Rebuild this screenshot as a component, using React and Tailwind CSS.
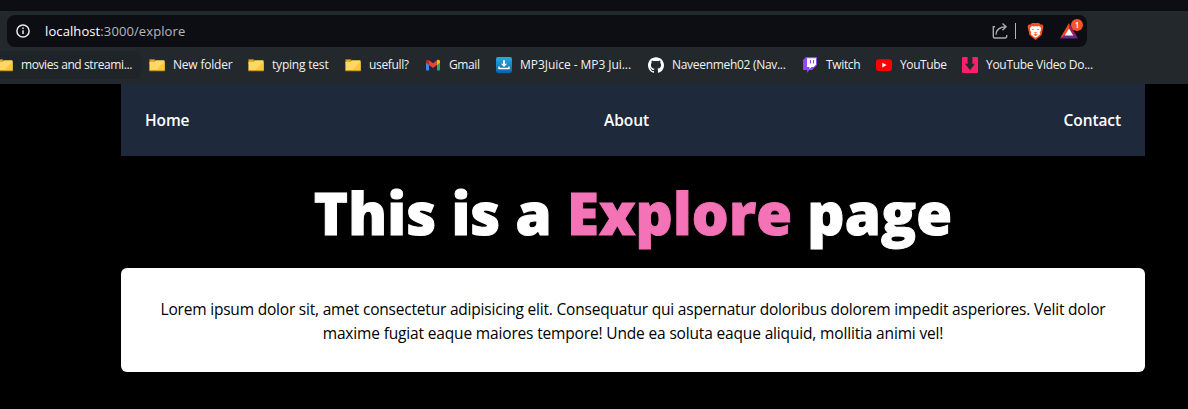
import { SiGithub } from "react-icons/si";

function Folder() {
  return (
    <svg viewBox="0 0 16 16" className="size-4 shrink-0">
      <path d="M.6 2.200h5.200l1 1.300v3H.4V2.600z" fill="#c08a14" />
      <rect x="1.300" y="3.300" width="4" height="1.200" fill="#e8bd3f" />
      <path d="M.4 4.800h5.400l1.100-1.500h8.200l.5.500v9.700H.4z" fill="#ffd862" />
      <path d="M15.600 4.400v9.100H7z" fill="#fcc738" />
      <path d="M.4 13.200h15.200v1H.4z" fill="#d89b20" />
    </svg>
  );
}

function Gmail() {
  return (
    <svg viewBox="0 0 16 16" className="size-4 shrink-0">
      <path d="M1 4.500h3v9H2a1 1 0 0 1-1-1z" fill="#4285f4" />
      <path d="M12 4.500h3v8a1 1 0 0 1-1 1h-2z" fill="#34a853" />
      <path d="M1 4.500C1 3 2.800 2.300 4 3.300V8L1 5.800z" fill="#c5221f" />
      <path d="M12 3.300c1.200-1 3-.3 3 1.200v1.300L12 8z" fill="#fbbc04" />
      <path d="M4 3.300l4 3 4-3V8l-4 3-4-3z" fill="#ea4335" />
    </svg>
  );
}

function Juice() {
  return (
    <svg viewBox="0 0 16 16" className="size-4 shrink-0">
      <defs>
        <linearGradient id="juice" x1="0" y1="0" x2="0" y2="1">
          <stop stopColor="#2da9df" />
          <stop offset="1" stopColor="#0564ab" />
        </linearGradient>
      </defs>
      <rect width="16" height="16" rx="2" fill="url(#juice)" />
      <path d="M7 3.300h2v3.500h2.200L8 10 4.800 6.800H7z" fill="#fff" />
      <path d="M3 9.500v2h10v-2" fill="none" stroke="#fff" strokeWidth="1.500" />
    </svg>
  );
}

function Github() {
  return <SiGithub className="size-4 shrink-0 text-white" />;
}

function Twitch() {
  return (
    <svg viewBox="0 0 16 16" className="size-4 shrink-0">
      <path d="M1 3l3-3h11v8l-5 5H7.500L5 15.700V13H1z" fill="#9146ff" />
      <path d="M5 1.200h9v6.400l-2.300 2.300H9.500l-2 2v-2H5z" fill="#fff" />
      <path d="M8.500 3v3.500M11.500 3v3.500" stroke="#9146ff" strokeWidth="1.100" />
    </svg>
  );
}

function Youtube() {
  return (
    <svg viewBox="0 0 16 16" className="size-4 shrink-0">
      <rect y="2.300" width="16" height="11.600" rx="2.600" fill="#f00" />
      <path d="M6.300 5.700v4.700L10.600 8z" fill="#fff" />
    </svg>
  );
}

function Downloader() {
  return (
    <svg viewBox="0 0 16 16" className="size-4 shrink-0">
      <rect width="16" height="16" rx="1" fill="#ff1f6b" />
      <path d="M5.600 0h4.800v6.700H13L8 13.300 3 6.700h2.600z" fill="#23282c" />
    </svg>
  );
}

const bookmarks = [
  { Icon: Folder, label: "movies and streami...", box: "w-[112px] tracking-[-0.4px]" },
  { Icon: Folder, label: "New folder", box: "w-[59px] tracking-[-0.2px]" },
  { Icon: Folder, label: "typing test", box: "w-[57px] tracking-[-0.2px]" },
  { Icon: Folder, label: "usefull?", box: "w-[40px] tracking-[-0.35px]" },
  { Icon: Gmail, label: "Gmail", box: "w-[31px] tracking-[-0.4px]" },
  { Icon: Juice, label: "MP3Juice - MP3 Jui...", box: "w-[112px] tracking-[-0.05px]" },
  { Icon: Github, label: "Naveenmeh02 (Nav...", box: "w-[114px] tracking-[-0.3px]" },
  { Icon: Twitch, label: "Twitch", box: "w-[34px] tracking-[-0.35px]" },
  { Icon: Youtube, label: "YouTube", box: "w-[46px] tracking-[-0.4px]" },
  { Icon: Downloader, label: "YouTube Video Do...", box: "w-[108px] tracking-[-0.3px]" },
];

function AddressBar() {
  return (
    <div className="ml-[7px] flex h-8 w-[1080px] items-center rounded-lg bg-[#0d0e13] pl-2 pr-1">
      <svg viewBox="0 0 16 16" className="size-4" fill="none" stroke="#e8eaed">
        <circle cx="8" cy="8" r="6.100" strokeWidth="1.500" />
        <path d="M8 7.200v3.900M8 4.600v1.500" strokeWidth="1.500" />
      </svg>
      <div className="ml-[14px] text-[13px] leading-4 tracking-[0.1px] text-[#b4b8bd]">
        <span className="text-white">localhost</span>:3000/explore
      </div>
      <div className="ml-auto flex items-center">
        <svg viewBox="0 0 18 18" className="size-[18px]" fill="none" stroke="#a8abae" strokeWidth="1.400">
          <path d="M4 4.700H2.300v9.800a1.500 1.500 0 0 0 1.500 1.500h10.400a1.500 1.500 0 0 0 1.500-1.500V13" />
          <path d="M5 12.600C5.300 8 8 5 14.800 4.800M11.500 1.500L15 4.800l-3.500 3.400" />
        </svg>
        <div className="ml-[6px] h-4 w-px bg-[#b2b4b6]" />
        <div className="ml-[9px] flex size-5 items-center justify-center">
          <svg viewBox="0 0 18 20" className="h-[19px] w-[17px]">
            <path d="M5.200 1h7.600l1.400 1.600 2-.1 1.200 2.200-.5 2-1.500 7L9 19l-6.400-5.300-1.500-7-.5-2 1.200-2.200 2 .1z" fill="#fb4f1b" />
            <path d="M3 6.200l2.200-2 2 .5L9 4.200l1.800.5 2-.5 2.200 2-.5 3.200-1 1.200.5 2-2.800 2.600L9 16.700l-2.200-1.500L4 12.600l.5-2-1-1.200z" fill="#fff" />
            <path d="M4.700 7.300l2.700.3-.8 1.200zM13.300 7.300l-2.700.3.800 1.200zM7.200 10.700h3.600L9 12.300zM6.500 13.500L9 12.600l2.500.9L9 14.700z" fill="#fb4f1b" />
          </svg>
        </div>
        <div className="relative ml-[14px] size-6">
          <svg viewBox="0 0 24 24" className="size-6">
            <path d="M10 4L1 19.500l5-3L10 10z" fill="#ff4724" />
            <path d="M10 4l9 15.500-5-3L10 10z" fill="#9e1f63" />
            <path d="M1 19.500h18l-5-3.500H6z" fill="#662d91" />
            <path d="M10 9.500l4.300 7H5.700z" fill="#fff" />
          </svg>
          <span className="absolute left-[12px] top-0 flex size-3 items-center justify-center rounded-full bg-[#fb542b] text-[8px] font-semibold leading-none text-white">
            1
          </span>
        </div>
      </div>
    </div>
  );
}

function Browser() {
  return (
    <header className="h-[84px] overflow-hidden bg-[#23282c]">
      <div className="h-[11px] bg-[#0d0e13]" />
      <div className="h-1" />
      <AddressBar />
      <div className="mt-1 -ml-[11px] flex h-7 items-center">
        {bookmarks.map(({ Icon, label, box }, i) => (
          <div
            key={label}
            className={
              i === 0
                ? "flex h-7 shrink-0 items-center gap-2 rounded-lg bg-[#1f2428] px-2"
                : "flex h-7 shrink-0 items-center gap-2 px-2"
            }
          >
            <Icon />
            <span className={`${box} whitespace-nowrap text-[12px] leading-4 text-[#f1f2f3]`}>{label}</span>
          </div>
        ))}
      </div>
    </header>
  );
}

export default function App() {
  return (
    <div className="h-[409px] overflow-hidden bg-black font-['Open_Sans','Noto_Sans',sans-serif]">
      <Browser />
      <main className="ml-[121px] w-[1024px]">
        <nav className="flex h-[72px] items-center justify-between bg-[#1e293b] px-6 pt-px text-[15.5px] font-semibold tracking-[-0.1px] text-white">
          <a>Home</a>
          <a>About</a>
          <a>Contact</a>
        </nav>
        <h1 className="flex h-[112px] items-center justify-center whitespace-pre pt-[2px] text-[58px] font-extrabold leading-none tracking-[0.1px] text-white [-webkit-text-stroke:1px]">
          This is a <span className="text-[#f472b6]">Explore</span> page
        </h1>
        <p className="h-[104px] whitespace-nowrap rounded-md bg-white pt-[29px] text-center text-[15.5px] leading-6 tracking-[-0.2px] text-black">
          Lorem ipsum dolor sit, amet consectetur adipisicing elit. Consequatur qui aspernatur doloribus dolorem impedit asperiores. Velit dolor
          <br />
          <span className="tracking-[-0.16px]">maxime fugiat eaque maiores tempore! Unde ea soluta eaque aliquid, mollitia animi vel!</span>
        </p>
      </main>
    </div>
  );
}
